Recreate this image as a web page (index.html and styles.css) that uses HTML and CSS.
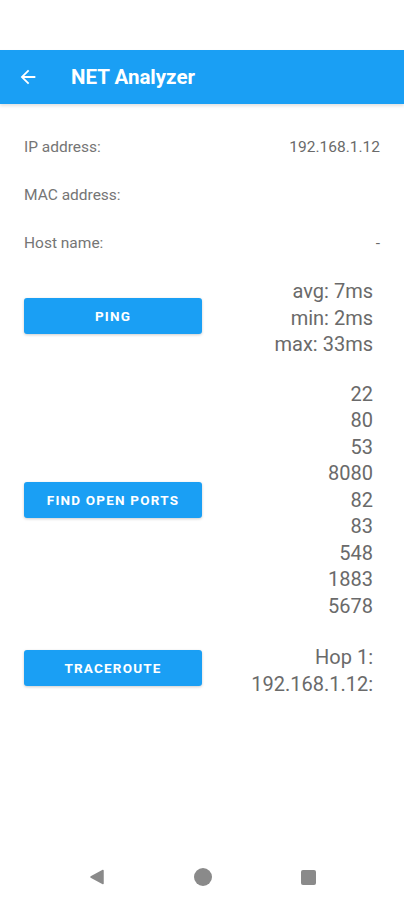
FILE: index.html
```html
<!DOCTYPE html>
<html lang="en">
<head>
  <meta charset="UTF-8" />
  <meta name="viewport" content="width=device-width, initial-scale=1.0"/>
  <title>NET Analyzer</title>
  <link rel="stylesheet" href="styles.css">
</head>
<body>
  <div class="status-bar"></div>

  <header class="app-bar">
    <svg class="back" viewBox="0 0 24 24" width="22" height="22">
      <path d="M20 11H7.83l5.59-5.59L12 4l-8 8 8 8 1.41-1.41L7.83 13H20v-2z" fill="#fff"/>
    </svg>
    <h1>NET Analyzer</h1>
  </header>

  <main class="content">
    <div class="info-row"><span>IP address:</span><span class="value">192.168.1.12</span></div>
    <div class="info-row"><span>MAC address:</span><span class="value"></span></div>
    <div class="info-row"><span>Host name:</span><span class="value">-</span></div>

    <section class="tool ping">
      <button>PING</button>
      <div class="result">
        <div>avg: 7ms</div>
        <div>min: 2ms</div>
        <div>max: 33ms</div>
      </div>
    </section>

    <section class="tool ports">
      <button>FIND OPEN PORTS</button>
      <div class="result">
        <div>22</div>
        <div>80</div>
        <div>53</div>
        <div>8080</div>
        <div>82</div>
        <div>83</div>
        <div>548</div>
        <div>1883</div>
        <div>5678</div>
      </div>
    </section>

    <section class="tool trace">
      <button>TRACEROUTE</button>
      <div class="result">Hop 1: 192.168.1.12:</div>
    </section>
  </main>

  <nav class="nav-bar">
    <svg viewBox="0 0 16 16" width="16" height="16"><path d="M14 1.5v13L2 8z" fill="#8a8a8a" stroke="#8a8a8a" stroke-width="1.5" stroke-linejoin="round"/></svg>
    <span class="home"></span>
    <span class="recent"></span>
  </nav>
</body>
</html>
```

FILE: styles.css
```css
body {
  margin: 0;
  width: 404px;
  height: 900px;
  position: relative;
  font-family: Roboto, "Liberation Sans", sans-serif;
  background: #fff;
  color: #6e6e6e;
}
.status-bar {
  height: 50px;
}
.app-bar {
  height: 54px;
  background: #1a9ff4;
  display: flex;
  align-items: center;
  padding-left: 17px;
  box-shadow: 0 2px 3px rgba(0, 0, 0, 0.12);
}
.app-bar .back {
  margin-right: 32px;
}
h1 {
  margin: 0;
  font-size: 20.5px;
  font-weight: 700;
  color: #fff;
}
.content {
  padding: 19px 24px 0;
}
.info-row {
  height: 48px;
  display: flex;
  align-items: center;
  justify-content: space-between;
  font-size: 15.5px;
  color: #757575;
}
.info-row .value {
  color: #6a6a6a;
}
.tool {
  display: grid;
  grid-template-columns: 178px 1fr;
  column-gap: 20px;
  align-items: center;
  padding-right: 7px;
}
.ping {
  margin-top: 11px;
}
.ports {
  margin-top: 23px;
}
.trace {
  margin-top: 25px;
}
button {
  height: 36px;
  border: none;
  border-radius: 3px;
  background: #1a9ff4;
  color: #fff;
  font-family: Roboto, "Liberation Sans", sans-serif;
  font-size: 13.5px;
  font-weight: 700;
  letter-spacing: 1.2px;
  box-shadow: 0 1px 3px rgba(0, 0, 0, 0.2);
}
.ping button {
  margin-top: -3px;
}
.trace button {
  margin-top: -6px;
}
.result {
  text-align: right;
  font-size: 20px;
  line-height: 26.5px;
  color: #6a6a6a;
}
.nav-bar {
  position: absolute;
  left: 0;
  right: 0;
  top: 868px;
  display: flex;
  justify-content: space-between;
  align-items: center;
  padding: 0 88px 0 89px;
  height: 18px;
}
.home {
  width: 18px;
  height: 18px;
  border-radius: 50%;
  background: #8a8a8a;
}
.recent {
  width: 15px;
  height: 15px;
  border-radius: 2px;
  background: #8a8a8a;
}
```
